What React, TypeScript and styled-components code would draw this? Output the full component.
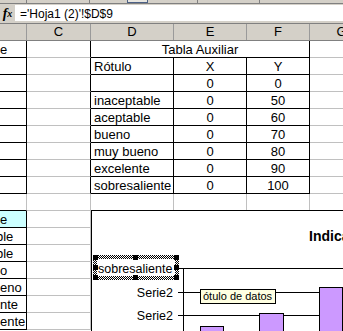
import styled, { createGlobalStyle } from "styled-components";

type Line = "grid" | "black";
type Align = "left" | "center" | "right";

interface CellDef {
  text?: string;
  align?: Align;
  span?: number;
  right?: Line;
  bottom?: Line;
  bg?: string;
  shift?: number;
}

const COLS = [27, 64, 83, 73, 63, 64];
const HEADERS = ["", "C", "D", "E", "F", "G"];

const tabla: [string, string, string][] = [
  ["Rótulo", "X", "Y"],
  ["", "0", "0"],
  ["inaceptable", "0", "50"],
  ["aceptable", "0", "60"],
  ["bueno", "0", "70"],
  ["muy bueno", "0", "80"],
  ["excelente", "0", "90"],
  ["sobresaliente", "0", "100"],
];

// lo que se ve de la columna B (el resto queda fuera por el scroll)
const colB: [string, number][] = [
  ["ble", -4],
  ["ble", -4],
  ["o", 0],
  ["eno", 0],
  ["nte", 0],
  ["ente", 0],
];

const blank = (): CellDef => ({});

function buildRows(): CellDef[][] {
  const rows: CellDef[][] = [];
  rows.push([
    { text: "e", right: "black", bottom: "black" },
    { right: "black" },
    { text: "Tabla Auxiliar", align: "center", span: 3, right: "black", bottom: "black" },
    blank(),
  ]);
  tabla.forEach(([d, e, f]) => {
    rows.push([
      { right: "black", bottom: "black" },
      { right: "black" },
      { text: d, right: "black", bottom: "black" },
      { text: e, align: "center", right: "black", bottom: "black" },
      { text: f, align: "center", right: "black", bottom: "black" },
      blank(),
    ]);
  });
  rows.push([{ bottom: "black" }, blank(), blank(), blank(), blank(), blank()]);
  rows.push([
    { text: "e", right: "black", bottom: "black", bg: "#ccffff" },
    blank(),
    blank(),
    blank(),
    blank(),
    blank(),
  ]);
  colB.forEach(([t, s]) => {
    rows.push([
      { text: t, shift: s, right: "black", bottom: "black" },
      blank(),
      blank(),
      blank(),
      blank(),
      blank(),
    ]);
  });
  return rows;
}

const rows = buildRows();

export default function App() {
  return (
    <>
      <GlobalStyle />
      <Window>
        <ToolStrip>
          <StripSeg $w={27} $sep />
          <StripSeg $w={63} $sep />
          <StripSeg $w={37} />
          <StripButton />
          <StripSeg $w={50} $sep />
          <StripSeg $w={62} $sep />
        </ToolStrip>

        <FormulaBar>
          <FxBox>
            f<sub>x</sub>
          </FxBox>
          <FormulaInput>='Hoja1 (2)'!$D$9</FormulaInput>
        </FormulaBar>

        <HeaderRow>
          {HEADERS.map((h, i) => (
            <HeaderCell key={i}>{h}</HeaderCell>
          ))}
        </HeaderRow>

        <Sheet>
          <Grid>
            {rows.map((row, r) =>
              row.map((c, i) => (
                <Cell
                  key={`${r}-${i}`}
                  $span={c.span ?? 1}
                  $align={c.align ?? "left"}
                  $right={c.right ?? "grid"}
                  $bottom={c.bottom ?? "grid"}
                  $bg={c.bg ?? "#fff"}
                  $first={i === 0}
                >
                  {c.text && <CellText $shift={c.shift ?? 0}>{c.text}</CellText>}
                </Cell>
              ))
            )}
          </Grid>

          <ChartFrame>
            <svg width="300" height="200" shapeRendering="crispEdges">
              <defs>
                <pattern id="hatch" width="2" height="2" patternUnits="userSpaceOnUse">
                  <rect width="2" height="2" fill="#fff" />
                  <rect width="1" height="1" fill="#000" />
                  <rect x="1" y="1" width="1" height="1" fill="#000" />
                </pattern>
              </defs>

              <text x="217" y="30" fontFamily="'Liberation Sans', Arial, sans-serif" fontSize="14" fontWeight="bold">
                Indicadores
              </text>

              {[57.5, 81.5, 104.5].map(y => (
                <g key={y}>
                  <line x1="91" x2="300" y1={y} y2={y} stroke="#000" />
                  <line x1="86" x2="91" y1={y} y2={y} stroke="#000" />
                </g>
              ))}
              <line x1="91.5" x2="91.5" y1="57" y2="200" stroke="#000" />

              <rect x="108.5" y="115.5" width="23" height="100" fill="#cc99ff" stroke="#000" />
              <rect x="167.5" y="102.5" width="24" height="110" fill="#cc99ff" stroke="#000" />
              <rect x="227.5" y="76.5" width="23" height="130" fill="#cc99ff" stroke="#000" />

              <path
                d="M1 44 H87 V69 H1 Z M5 48 V65 H83 V48 Z"
                fill="url(#hatch)"
                fillRule="evenodd"
              />
              {[
                [1, 44],
                [41, 44],
                [82, 44],
                [1, 54],
                [82, 54],
                [1, 64],
                [41, 64],
                [82, 64],
              ].map(([x, y]) => (
                <rect key={`${x}-${y}`} x={x} y={y} width="5" height="5" fill="#000" />
              ))}

              <g fontFamily="'Liberation Sans', Arial, sans-serif" fontSize="12.5" fill="#000">
                <text x="6" y="61.5">sobresaliente</text>
                <text x="81" y="85.5" textAnchor="end">
                  Serie2
                </text>
                <text x="81" y="108.5" textAnchor="end">
                  Serie2
                </text>
              </g>
            </svg>

            <Tip>ótulo de datos</Tip>
          </ChartFrame>
        </Sheet>
      </Window>
    </>
  );
}

// ---------- styled components ----------
const GlobalStyle = createGlobalStyle`
  html, body {
    margin: 0;
    padding: 0;
    background: #fff;
  }
  body {
    font-family: "Liberation Sans", Arial, sans-serif;
    color: #000;
    overflow: hidden;
  }
`;

const Window = styled.div`
  width: 343px;
  height: 331px;
  overflow: hidden;
  display: flex;
  flex-direction: column;
  background: #fff;
`;

const ToolStrip = styled.div`
  flex: 0 0 auto;
  display: flex;
  height: 3px;
  background: #d4d0c8;
  border-bottom: 1px solid #808080;
`;

const StripSeg = styled.div<{ $w: number; $sep?: boolean }>`
  flex: 0 0 ${({ $w }) => $w}px;
  border-right: ${({ $sep }) => ($sep ? "1px solid #808080" : "none")};
  box-sizing: border-box;
`;

const StripButton = styled.div`
  flex: 0 0 21px;
  box-sizing: border-box;
  border: 1px solid #4d6185;
  border-top: none;
  background: #e8e6e0;
`;

const FormulaBar = styled.div`
  flex: 0 0 auto;
  display: flex;
  height: 19px;
  background: #d4d0c8;
`;

const FxBox = styled.div`
  flex: 0 0 15px;
  display: flex;
  align-items: center;
  justify-content: center;
  font-family: "Liberation Serif", "Times New Roman", serif;
  font-style: italic;
  font-weight: bold;
  font-size: 14px;
  line-height: 1;

  sub {
    font-size: 10px;
    vertical-align: -1px;
  }
`;

const FormulaInput = styled.div`
  flex: 1 1 auto;
  display: flex;
  align-items: flex-end;
  height: 16px;
  margin: 1px 0 2px;
  padding-left: 5px;
  background: #fff;
  font-size: 12px;
  line-height: 13px;
  white-space: nowrap;
`;

const HeaderRow = styled.div`
  flex: 0 0 auto;
  display: grid;
  grid-template-columns: ${COLS.map(c => `${c}px`).join(" ")};
  background: #d4d0c8;
  border-top: 1px solid #808080;
  border-bottom: 1px solid #808080;
`;

const HeaderCell = styled.div`
  height: 16px;
  display: flex;
  align-items: center;
  justify-content: center;
  border-right: 1px solid #9a9a9a;
  font-size: 13px;
  line-height: 16px;
`;

const Sheet = styled.div`
  position: relative;
  flex: 1 1 auto;
  min-height: 0;
  overflow: hidden;
`;

const Grid = styled.div`
  display: grid;
  grid-template-columns: ${COLS.map(c => `${c}px`).join(" ")};
`;

const lineColor = (l: Line) => (l === "black" ? "#000" : "#c0c0c0");

const Cell = styled.div<{
  $span: number;
  $align: Align;
  $right: Line;
  $bottom: Line;
  $bg: string;
  $first: boolean;
}>`
  grid-column: span ${({ $span }) => $span};
  height: 16px;
  display: flex;
  align-items: flex-end;
  justify-content: ${({ $align }) =>
    $align === "center" ? "center" : $align === "right" ? "flex-end" : "flex-start"};
  padding: 0 ${({ $first }) => ($first ? "0" : "3px")};
  overflow: hidden;
  white-space: nowrap;
  font-size: 13px;
  line-height: 14px;
  background: ${({ $bg }) => $bg};
  border-right: 1px solid ${({ $right }) => lineColor($right)};
  border-bottom: 1px solid ${({ $bottom }) => lineColor($bottom)};
`;

const CellText = styled.span<{ $shift: number }>`
  flex: 0 0 auto;
  margin-left: ${({ $shift }) => $shift}px;
`;

const ChartFrame = styled.div`
  position: absolute;
  left: 91px;
  top: 169px;
  width: 300px;
  height: 200px;
  background: #fff;
  border-left: 1px solid #000;
  border-top: 1px solid #000;

  svg {
    display: block;
  }
`;

const Tip = styled.div`
  position: absolute;
  left: 108px;
  top: 78px;
  width: 72px;
  height: 13px;
  padding-left: 2px;
  background: #ffffe1;
  border: 1px solid #000;
  font-size: 11px;
  line-height: 13px;
  white-space: nowrap;
`;
